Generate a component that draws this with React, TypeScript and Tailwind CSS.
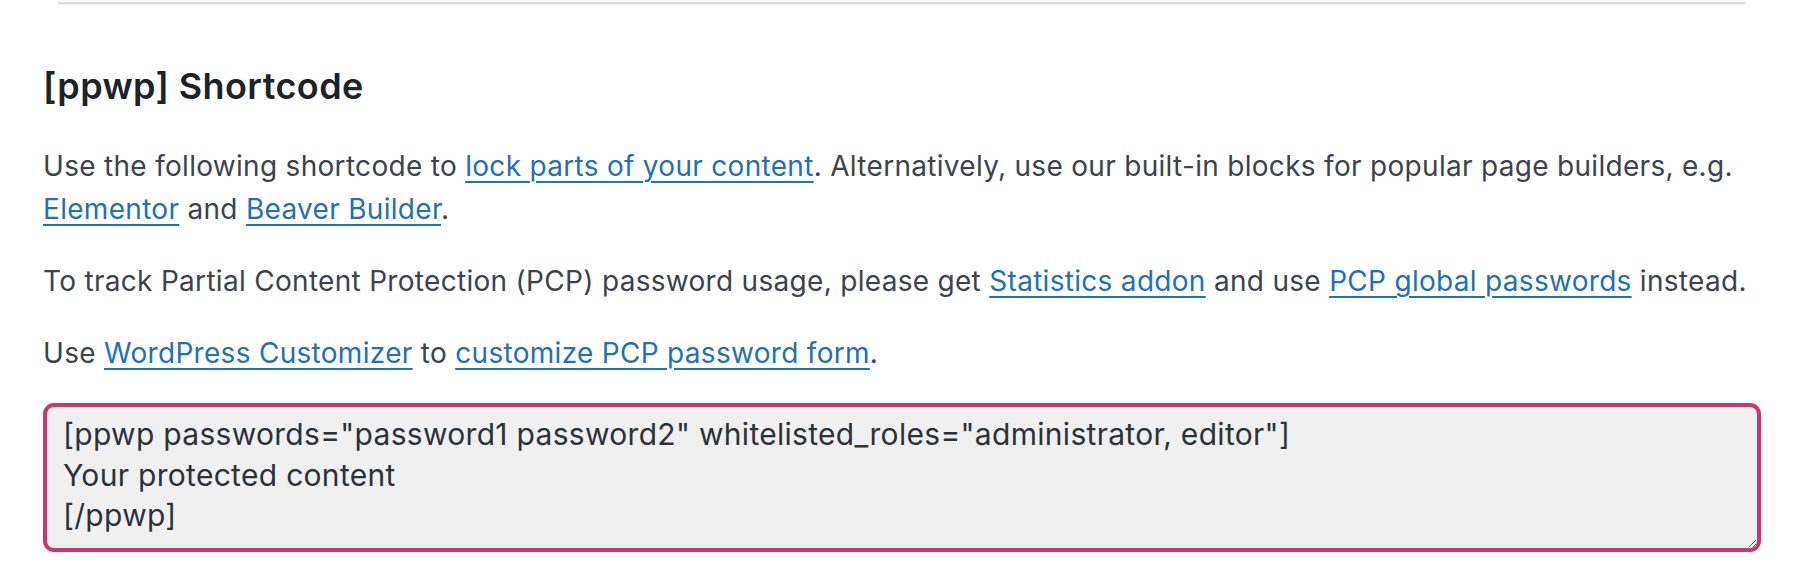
import React from "react";

const link = "text-[#2271b1] underline decoration-[2px] underline-offset-[5px]";

function A({ children }: { children: React.ReactNode }) {
  return (
    <a href="#" className={link}>
      {children}
    </a>
  );
}

export default function App() {
  const code =
    '[ppwp passwords="password1 password2" whitelisted_roles="administrator, editor"]\nYour protected content\n[/ppwp]';

  return (
    <div className="h-[586px] w-[1800px] overflow-hidden bg-white font-['Inter','Noto_Sans',sans-serif] text-[#3c434a]">
      <div className="ml-[58px] mr-[55px] mt-[2px] h-[3px] border-t-2 border-b border-t-[#dcdcde] border-b-[#f0f0f1]" />

      <div className="pl-[43px] pr-[39px]">
        <h2 className="mt-[59px] text-[36px] font-semibold leading-[44px] tracking-[0.4px] text-[#1d2327]">
          [ppwp] Shortcode
        </h2>

        <div className="text-[28px] leading-[43px] tracking-[0.3px]">
          <p className="mt-[37px]">
            Use the following shortcode to <A>lock parts of your content</A>. Alternatively, use our built-in blocks
            for popular page builders, e.g. <A>Elementor</A> and <A>Beaver Builder</A>.
          </p>

          <p className="mt-[29px]">
            To track Partial Content Protection (PCP) password usage, please get <A>Statistics addon</A> and use{" "}
            <A>PCP global passwords</A> instead.
          </p>

          <p className="mt-[29px]">
            Use <A>WordPress Customizer</A> to <A>customize PCP password form</A>.
          </p>
        </div>

        <textarea
          readOnly
          defaultValue={code}
          className="mt-[28px] box-border block h-[149px] w-full resize-y rounded-[11px] border-[4px] border-[#c8376d] bg-[#f0f0f1] pb-[12px] pl-[16px] pr-[12px] pt-[7px] font-['Inter','Noto_Sans',sans-serif] text-[30px] leading-[40.5px] tracking-[0.3px] text-[#2c3338] outline-none"
        />
      </div>
    </div>
  );
}
